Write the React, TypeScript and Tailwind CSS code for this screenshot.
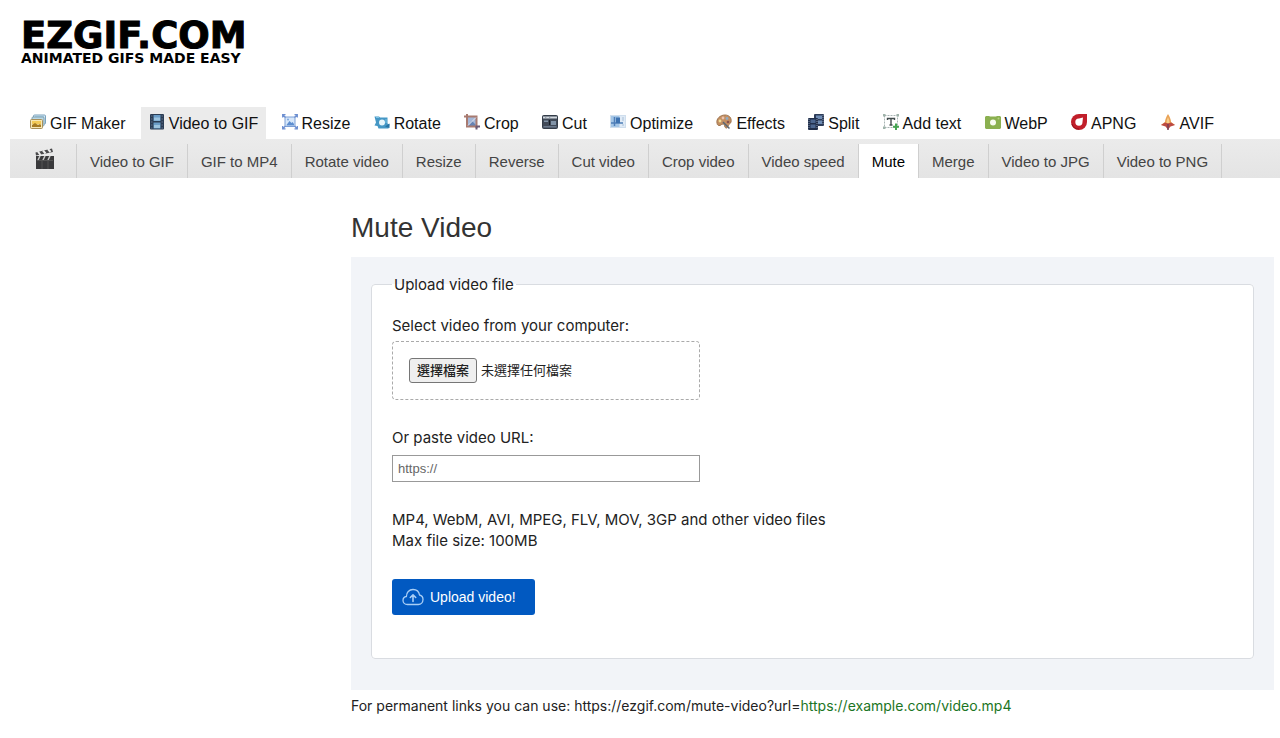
import React, { useRef, useState } from 'react';

interface NavItem {
    label: string;
    icon: React.ReactNode;
    active?: boolean;
}

const Svg: React.FC<{ children: React.ReactNode }> = ({ children }) => (
    <svg width="16" height="16" viewBox="0 0 16 16" fill="none" className="mb-1 shrink-0" aria-hidden="true">
        {children}
    </svg>
);

const GifIcon = () => (
    <Svg>
        <rect x="3.500" y="1" width="12" height="9" rx="1" fill="#d7e8f4" stroke="#7ba3bd" />
        <path d="M5 2h9v3H5z" fill="#a5cfe9" />
        <rect x="2" y="3" width="12" height="9" rx="1" fill="#bcd9e6" stroke="#7e9fae" />
        <rect x="0.500" y="5.500" width="12" height="9" rx="1" fill="#f6e7b6" stroke="#a9905a" />
        <path d="M2 7h9v3H2z" fill="#f3ca57" />
        <path d="M2 13v-2l3-2 3 2 2-1 1 1v2z" fill="#a77b21" />
    </Svg>
);

const FilmIcon = () => (
    <Svg>
        <rect x="1" y="0" width="14" height="15.500" rx="1" fill="#2b3d55" />
        <path d="M4.500 1h7v6h-7zM4.500 8.500h7v6h-7z" fill="#6a9dc8" />
        <path d="M5 3.500h6v3H5zM5 11h6v3H5z" fill="#9cc4e0" />
        <path d="M2 2h1.500M2 5h1.500M2 8h1.500M2 11h1.500M2 14h1.500M12.500 2H14M12.500 5H14M12.500 8H14M12.500 11H14M12.500 14H14" stroke="#60708a" />
    </Svg>
);

const ResizeIcon = () => (
    <Svg>
        <rect x="3" y="3" width="10" height="9.500" fill="#d6e7fa" stroke="#7c9fd6" />
        <path d="M4.500 11l3-4 2 2 1-1 1.500 2v1.500h-7.500z" fill="#5d8ed0" />
        <circle cx="6" cy="5.500" r="1" fill="#7ea7de" />
        <path d="M.7 3.500V.700H3.500M12.500.700h2.800v2.800M15.300 12v2.800h-2.800M3.500 14.800H.700V12M1 1l2.500 2.500M15 1l-2.500 2.500M15 14.500L12.500 12M1 14.500L3.500 12" stroke="#6d8fd0" strokeWidth="1.300" />
    </Svg>
);

const RotateIcon = () => (
    <Svg>
        <path d="M.5 2.500h4.500l1 1h7.500v6l2 1-1 4H4.500l-1-2.500-3-.5 1.500-3z" fill="#4597c5" />
        <path d="M2 3.500h3M12 5v4" stroke="#7ec5e7" />
        <circle cx="8" cy="8.500" r="3" fill="#e7f6fc" />
        <path d="M11 12.500l4.500-3V14z" fill="#2673a5" />
    </Svg>
);

const CropIcon = () => (
    <Svg>
        <rect x="4" y="3" width="9" height="9" fill="#a3b7d8" />
        <path d="M4 12l4-5 5 5z" fill="#6683b4" />
        <path d="M0 2.500h12.500V14M3 0v12.500h10" stroke="#a87a70" strokeWidth="2" />
        <path d="M4 11.500L12 3.500" stroke="#e3e4ee" />
        <path d="M12.500 12v3.500M12 12.500h4" stroke="#6b5a74" strokeWidth="2" />
    </Svg>
);

const CutIcon = () => (
    <Svg>
        <rect x="0.500" y="1.500" width="15" height="13" rx="1" fill="#414a58" stroke="#343d49" />
        <path d="M1 2.500h14v2H1z" fill="#d3d9df" />
        <path d="M3 2.500l1.500 2M7 2.500l1.500 2" stroke="#8a94a1" />
        <path d="M2 6.500h4v1.500H2zM9 7h5v4H9z" fill="#8294a8" />
        <path d="M1.500 12h13v1.500h-13z" fill="#6a788c" />
        <path d="M7.500 6v5" stroke="#151c26" />
    </Svg>
);

const OptimizeIcon = () => (
    <Svg>
        <rect x="0.500" y="1.500" width="15" height="12" fill="#dfeaf6" stroke="#cfdeed" />
        <rect x="1" y="2" width="8.500" height="11" fill="#a3c5e6" />
        <path d="M4.500 3v9M1 9h12" stroke="#4f7fb8" strokeWidth="1.500" />
        <path d="M6 3.500h4V9H6z" fill="#3d72b1" />
        <path d="M12 4h2M12 6h2M12 11h2" stroke="#a9c0d7" />
    </Svg>
);

const EffectsIcon = () => (
    <Svg>
        <path d="M1 9c-1-4 3-8 8-8 4 0 7 3 6 7-.5 2-2.500 2-3 4s-2 3-3 1 0-3-2-3-2 2-4 1.500S1.300 10 1 9z" fill="#c38f62" stroke="#a07650" />
        <circle cx="4" cy="7" r="1.400" fill="#f2df97" />
        <circle cx="7" cy="4" r="1.400" fill="#ecc3ae" />
        <circle cx="11" cy="4.500" r="1.400" fill="#8fabc4" />
        <circle cx="12" cy="8" r="1.300" fill="#87504d" />
        <path d="M13.500 14.500L7 8" stroke="#5a6773" strokeWidth="1.500" />
    </Svg>
);

const SplitIcon = () => (
    <Svg>
        <rect x="6" y="0" width="10" height="12" rx="1" fill="#2d3c58" />
        <path d="M8 1.500h6V5H8zM8 6.500h6V10H8z" fill="#6f8cb4" />
        <rect x="0" y="4" width="10" height="12" rx="1" fill="#202f4b" />
        <path d="M2.500 5.500h5V9h-5zM2.500 10.500h5V14h-5z" fill="#4b668f" />
        <path d="M1 5v10M9 5v10M15 1v10" stroke="#8292ac" strokeDasharray="1 1" />
    </Svg>
);

const AddTextIcon = () => (
    <Svg>
        <rect x="1.500" y="1.500" width="13" height="12" stroke="#a9b5b4" strokeDasharray="2 1" />
        <path d="M0 0h2.500v2.500H0zM13.500 0H16v2.500h-2.500zM0 12.500h2.500V15H0z" fill="#9fb3aa" />
        <path d="M4.500 6V4.500h7V6M8 4.500V11M6.500 11h3" stroke="#424c4d" strokeWidth="1.400" />
        <path d="M13 9.500V16M10 12.800h6" stroke="#46a552" strokeWidth="2" />
    </Svg>
);

const WebpIcon = () => (
    <Svg>
        <path d="M0 3l1-1h3l1 .5h6l1-.5h3l1 1v11l-1 1H1l-1-1z" fill="#8bb050" />
        <circle cx="8" cy="8.500" r="3" fill="#f8fbf1" />
        <circle cx="13.500" cy="4.500" r="1" fill="#b3d17e" />
    </Svg>
);

const ApngIcon = () => (
    <Svg>
        <path d="M8 0h8v8a8 8 0 1 1-8-8z" fill="#c11f2a" />
        <path d="M8 4.500l4-1-.500 4.500A3.600 3.600 0 1 1 8 4.500z" fill="#fff" />
        <path d="M1 10a7 7 0 0 0 7 5" stroke="#8e101a" />
    </Svg>
);

const AvifIcon = () => (
    <Svg>
        <path d="M8 0c2 3 3 6 3 8l4 3-4 .5H5L1 11l4-3c0-2 1-5 3-8z" fill="#e9a154" />
        <path d="M8 3c1 2 1.500 4 1.500 6h-3c0-2 .5-4 1.500-6z" fill="#f8cf8c" />
        <path d="M1 11l4-2.500 3 1 3-1 4 2.500-4.500 1.500L8 15.500 5.500 12.500z" fill="#bd4a42" />
        <path d="M8 10v6" stroke="#774158" strokeWidth="1.500" />
    </Svg>
);

const ClapperIcon = () => (
    <svg width="20" height="22" viewBox="0 0 20 22" aria-hidden="true">
        <path d="M1 8h18v13H1z" fill="#3a3a3c" />
        <path d="M1 7.500L.5 4.500 17 .5l1 3.500z" fill="#4a4a4c" />
        <path d="M3 3.500l2.500 3.500M8 2.500l2.500 3M13 1l2.500 3" stroke="#ededed" strokeWidth="2" />
        <path d="M5 8l-2 4M10 8l-2 4M15 8l-2 4" stroke="#c9c9c9" strokeWidth="1.500" />
        <path d="M2 12.500h16M7 13v8M13 13v8" stroke="#555" />
    </svg>
);

const CloudUploadIcon = () => (
    <svg width="22" height="18" viewBox="0 0 22 18" fill="none" stroke="#a9cef5" strokeWidth="1.300" strokeLinecap="round" strokeLinejoin="round" aria-hidden="true">
        <path d="M5.500 16.500C2.800 16.500 1 14.700 1 12.400c0-2 1.400-3.600 3.400-3.900C4.300 4.400 7.200 1.500 11 1.500c3.400 0 6 2.200 6.500 5.500 2.100.5 3.500 2.300 3.500 4.600 0 2.700-2 4.900-4.700 4.900z" />
        <path d="M11 13.500V7M8.300 9.500L11 6.800l2.700 2.700" strokeWidth="1.600" />
    </svg>
);

const mainNav: NavItem[] = [
    { label: 'GIF Maker', icon: <GifIcon /> },
    { label: 'Video to GIF', icon: <FilmIcon />, active: true },
    { label: 'Resize', icon: <ResizeIcon /> },
    { label: 'Rotate', icon: <RotateIcon /> },
    { label: 'Crop', icon: <CropIcon /> },
    { label: 'Cut', icon: <CutIcon /> },
    { label: 'Optimize', icon: <OptimizeIcon /> },
    { label: 'Effects', icon: <EffectsIcon /> },
    { label: 'Split', icon: <SplitIcon /> },
    { label: 'Add text', icon: <AddTextIcon /> },
    { label: 'WebP', icon: <WebpIcon /> },
    { label: 'APNG', icon: <ApngIcon /> },
    { label: 'AVIF', icon: <AvifIcon /> },
];

const subNav = [
    'Video to GIF',
    'GIF to MP4',
    'Rotate video',
    'Resize',
    'Reverse',
    'Cut video',
    'Crop video',
    'Video speed',
    'Mute',
    'Merge',
    'Video to JPG',
    'Video to PNG',
];

const Header = () => (
    <header className="pl-[10px]">
        <a href="#" className="ml-[11px] block w-fit pt-5 font-['DejaVu_Sans'] font-bold text-black">
            <span className="block text-[37px] leading-8 [-webkit-text-stroke:1px_black]">EZGIF.COM</span>
            <span className="block text-sm leading-3">ANIMATED GIFS MADE EASY</span>
        </a>
        <nav className="mt-[43px] flex max-w-[1212px] justify-between pl-3">
            {mainNav.map((item) => (
                <a
                    key={item.label}
                    href="#"
                    className={`flex h-8 items-center gap-1 px-2 pt-0.5 text-base whitespace-nowrap text-[#111] ${item.active ? 'bg-[#ebebeb]' : ''}`}
                >
                    {item.icon}
                    {item.label}
                </a>
            ))}
        </nav>
        <nav className="flex h-[39px] bg-linear-to-b from-[#ebebeb] to-[#e4e4e4] pt-[5px]">
            <a href="#" aria-label="Video tools" className="flex w-[67px] justify-center border-r border-[#cfcfcf] pt-1 pl-1">
                <ClapperIcon />
            </a>
            {subNav.map((label) => (
                <a
                    key={label}
                    href="#"
                    className={`border-r border-[#cfcfcf] px-[13px] text-[15px] leading-9 whitespace-nowrap ${label === 'Mute' ? 'bg-white text-black' : 'text-[#444]'}`}
                >
                    {label}
                </a>
            ))}
        </nav>
    </header>
);

const UploadForm = () => {
    const fileRef = useRef<HTMLInputElement>(null);
    const [fileName, setFileName] = useState('');

    return (
        <form className="bg-[#f2f4f8] px-5 pt-[17px] pb-[31px] text-[15px]" onSubmit={(e) => e.preventDefault()}>
            <fieldset className="rounded-sm border border-[#d9dce1] bg-white px-5 pb-[43px]">
                <legend className="px-0.5">Upload video file</legend>

                <label htmlFor="new-image" className="mt-5 block">Select video from your computer:</label>
                <div className="mt-[5px] flex h-[59px] w-[308px] items-center gap-1 rounded border border-dashed border-[#aaa] px-4 text-[13px]">
                    <button
                        type="button"
                        onClick={() => fileRef.current?.click()}
                        className="h-[25px] rounded-[3px] border border-[#767676] bg-[#efefef] px-[7px] font-medium"
                    >
                        選擇檔案
                    </button>
                    <span>{fileName || '未選擇任何檔案'}</span>
                    <input
                        ref={fileRef}
                        id="new-image"
                        type="file"
                        accept="video/*"
                        className="hidden"
                        onChange={(e) => setFileName(e.target.files?.[0]?.name ?? '')}
                    />
                </div>

                <label htmlFor="new-image-url" className="mt-[27px] block">Or paste video URL:</label>
                <input
                    id="new-image-url"
                    type="url"
                    placeholder="https://"
                    className="mt-[7px] block h-[27px] w-[308px] border border-[#999] px-[5px] font-['Liberation_Sans'] text-[13px] placeholder:text-[#666]"
                />

                <p className="mt-[27px]">
                    MP4, WebM, AVI, MPEG, FLV, MOV, 3GP and other video files
                    <br />
                    Max file size: 100MB
                </p>

                <button type="submit" className="mt-7 flex h-9 w-[143px] items-center gap-[6px] rounded-[3px] bg-[#0159c1] px-[10px] font-['Liberation_Sans'] text-sm text-white">
                    <CloudUploadIcon />
                    Upload video!
                </button>
            </fieldset>
        </form>
    );
};

const App: React.FC = () => (
    <div className="min-h-screen overflow-x-hidden bg-white font-['Liberation_Sans','Noto_Sans_CJK_TC',sans-serif] leading-[21px] text-[#222]">
        <Header />
        <main className="mr-[6px] ml-[351px] pt-8 pb-5 font-['Inter','Noto_Sans_CJK_TC',sans-serif] text-sm leading-[21px]">
            <h1 className="mb-[11px] font-['Liberation_Sans'] text-[28px] leading-9 text-[#333]">Mute Video</h1>
            <UploadForm />
            <p className="mt-[5px]">
                For permanent links you can use: https://ezgif.com/mute-video?url=
                <span className="text-[#1b7524]">https://example.com/video.mp4</span>
            </p>
        </main>
    </div>
);

export default App;
